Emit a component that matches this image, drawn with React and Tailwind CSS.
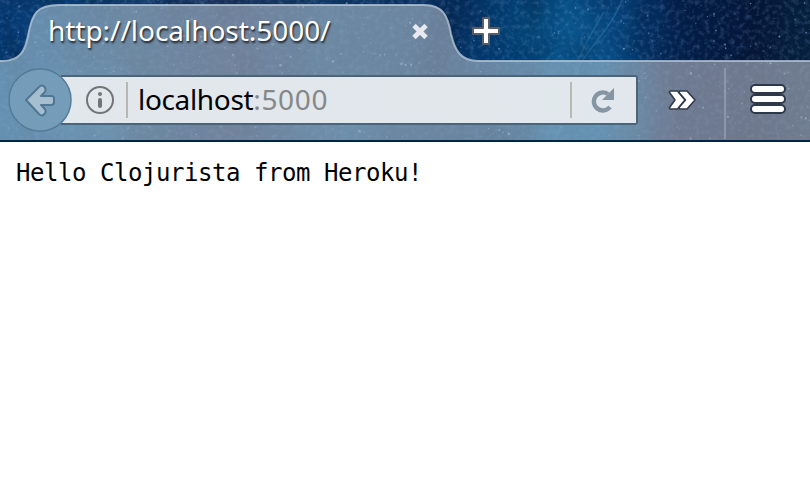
const CHROME_SHAPE =
  'M0 61 H2 C20 61 25 51 28 36 C32 13 37 5 59 5 H424 C443 5 448 16 451 34 C455 52 462 61 478 61 H810';

// Deterministic scatter of stars over the window theme
function makeStars(count, firstSeed) {
  let seed = firstSeed;
  const next = () => {
    seed = (seed * 16807) % 2147483647;
    return seed / 2147483647;
  };
  return Array.from({ length: count }, () => ({
    x: next() * 810,
    y: next() * 142,
    r: 0.4 + next() * next() * 1.1,
    o: 0.15 + next() * 0.45,
  }));
}
const STARS = makeStars(480, 4177);
const PANEL_STARS = makeStars(420, 90211);

function ThemeBackdrop() {
  return (
    <svg className="absolute inset-0" width="810" height="142" viewBox="0 0 810 142" aria-hidden="true">
      <defs>
        <linearGradient id="sky" x1="0" x2="1" y1="0" y2="0">
          <stop offset="0" stopColor="#053a74" />
          <stop offset="0.1" stopColor="#0a3f72" />
          <stop offset="0.28" stopColor="#1c345c" />
          <stop offset="0.4" stopColor="#123d6b" />
          <stop offset="0.54" stopColor="#083060" />
          <stop offset="0.62" stopColor="#023b6e" />
          <stop offset="0.68" stopColor="#064f86" />
          <stop offset="0.76" stopColor="#053f76" />
          <stop offset="0.84" stopColor="#04204c" />
          <stop offset="0.93" stopColor="#051638" />
          <stop offset="1" stopColor="#07213f" />
        </linearGradient>
        <linearGradient id="panel" x1="0" x2="1" y1="0" y2="0">
          <stop offset="0" stopColor="#88adc6" />
          <stop offset="0.16" stopColor="#90a6b9" />
          <stop offset="0.3" stopColor="#909fb3" />
          <stop offset="0.43" stopColor="#8fa8bc" />
          <stop offset="0.55" stopColor="#8fa0b3" />
          <stop offset="0.73" stopColor="#86aac2" />
          <stop offset="0.82" stopColor="#959cac" />
          <stop offset="1" stopColor="#959eae" />
        </linearGradient>
        <radialGradient id="glow">
          <stop offset="0" stopColor="#1686bd" stopOpacity="0.65" />
          <stop offset="1" stopColor="#1686bd" stopOpacity="0" />
        </radialGradient>
        <filter id="grain" x="0" y="0" width="100%" height="100%" colorInterpolationFilters="sRGB">
          <feTurbulence type="fractalNoise" baseFrequency="0.2" numOctaves="3" seed="8" />
          <feColorMatrix values="0 0 0 0 0.5  0 0 0 0 0.65  0 0 0 0 0.85  1.5 0 0 0 -0.68" />
        </filter>
        <filter id="clouds" x="0" y="0" width="100%" height="100%" colorInterpolationFilters="sRGB">
          <feTurbulence type="fractalNoise" baseFrequency="0.025 0.012" numOctaves="3" seed="3" />
          <feColorMatrix values="0 0 0 0 0  0 0 0 0 0.08  0 0 0 0 0.2  2 0 0 0 -0.75" />
        </filter>
        <clipPath id="panelArea">
          <path d={`${CHROME_SHAPE} V140 H0 Z`} />
        </clipPath>
      </defs>
      <rect width="810" height="142" fill="url(#sky)" />
      <ellipse cx="70" cy="112" rx="125" ry="55" fill="url(#glow)" />
      <ellipse cx="375" cy="118" rx="150" ry="50" fill="url(#glow)" opacity="0.5" />
      <ellipse cx="590" cy="115" rx="90" ry="80" fill="url(#glow)" opacity="0.8" />
      <ellipse cx="570" cy="28" rx="75" ry="40" fill="url(#glow)" opacity="0.25" />
      <g fill="none" stroke="#3489b9" strokeWidth="1.6" opacity="0.4">
        <path d="M622 0 C613 25 594 42 582 61 C574 74 570 105 554 142" />
        <path d="M604 12 C590 36 581 48 574 76" />
      </g>
      <rect width="810" height="142" filter="url(#clouds)" opacity="0.4" />
      <rect width="810" height="142" filter="url(#grain)" opacity="0.4" />
      <g fill="#a9cdf2">
        {STARS.map((s, i) => (
          <circle key={i} cx={s.x} cy={s.y} r={s.r} opacity={s.o} />
        ))}
      </g>
      <path d={`${CHROME_SHAPE} V140 H0 Z`} fill="url(#panel)" fillOpacity="0.73" />
      <g clipPath="url(#panelArea)" fill="#d3e2ef">
        {PANEL_STARS.map((s, i) => (
          <circle key={i} cx={s.x} cy={s.y} r={s.r} opacity={s.o * 0.7} />
        ))}
      </g>
      <path d={CHROME_SHAPE} fill="none" stroke="#b6c5d5" strokeOpacity="0.8" strokeWidth="2" />
      <rect y="140" width="810" height="2" fill="#032443" />
    </svg>
  );
}

function TabStrip() {
  return (
    <div className="relative flex h-[62px] items-center">
      <div className="ml-12 flex w-[381px] items-center justify-between">
        <span className="-mt-0.5 whitespace-nowrap text-[28px] leading-[36px] tracking-[-0.04px] text-white [text-shadow:1px_2px_2px_rgba(0,0,0,0.75)]">
          http://localhost:5000/
        </span>
        <svg width="18" height="18" viewBox="0 0 18 18" aria-label="Close tab">
          <path d="M3 3.5 L15 15.5 M15 3.5 L3 15.5" stroke="#e7e9ef" strokeWidth="4.8" />
        </svg>
      </div>
      <svg className="ml-[42px]" width="30" height="30" viewBox="0 0 30 30" aria-label="New tab">
        <path d="M12 2 H18 V12 H28 V18 H18 V28 H12 V18 H2 V12 H12 Z" fill="#fff" stroke="#5b5d65" strokeWidth="2" strokeLinejoin="round" />
      </svg>
    </div>
  );
}

function NavBar() {
  return (
    <div className="relative flex h-20 items-start">
      <svg className="relative z-10 ml-2 mt-[5px] shrink-0" width="65" height="66" viewBox="0 0 65 66" aria-label="Back">
        <circle cx="32" cy="33" r="31" fill="#759cb8" stroke="#557b98" strokeWidth="1.5" />
        <path d="M18 33 L31 20 Q34 17 36.5 20 Q39 23 36 26 L33 29 H43 Q46 29 46 31 V35 Q46 38 43 38 H33 L36 41 Q39 44 36.5 47 Q34 50 31 47 Z" fill="#a5bfd1" stroke="#4f7693" strokeWidth="2" strokeLinejoin="round" />
      </svg>
      <div className="-ml-3 mt-[13px] flex h-[50px] w-[577px] items-center rounded-r-[3px] border-y-2 border-r-2 border-[#4b6478] bg-[#e8ecef]/95">
        <svg className="ml-6 shrink-0" width="30" height="30" viewBox="0 0 30 30" fill="none" aria-label="Site information">
          <circle cx="15" cy="15" r="13" stroke="#727578" strokeWidth="2" />
          <circle cx="15" cy="9" r="2" fill="#727578" />
          <path d="M15 15 V21" stroke="#727578" strokeWidth="4" strokeLinecap="round" />
        </svg>
        <div className="ml-[11px] h-9 w-0.5 shrink-0 bg-[#b8b6b1]" />
        <div className="-mt-0.5 ml-[10px] w-[432px] whitespace-nowrap text-[28px] leading-[40px] tracking-[-0.34px] text-black">
          localhost<span className="tracking-[0.65px] text-[#85878a]">:5000</span>
        </div>
        <div className="h-9 w-0.5 shrink-0 bg-[#b9b8b3]" />
        <svg className="ml-[19px] shrink-0" width="24" height="26" viewBox="0 0 24 26" aria-label="Reload">
          <path d="M19 20 A9 9 0 1 1 17 7" fill="none" stroke="#8695a4" strokeWidth="4.4" />
          <path d="M23 1 V13 H11 Z" fill="#8695a4" />
        </svg>
      </div>
      <svg className="ml-[30px] mt-[26px] shrink-0" width="30" height="24" viewBox="0 0 30 24" aria-label="More tools">
        <g fill="#fff" stroke="#2f3b4a" strokeWidth="1.6" strokeLinejoin="round">
          <path d="M2 3 H9.5 L17 12 L9.5 21 H2 L1.5 19.5 L7 12 L1.5 4.5 Z" />
          <path d="M11.5 3 H19 L27 12 L19 21 H11.5 L11 19.5 L17.5 12 L11 4.5 Z" />
        </g>
      </svg>
      <div className="ml-[26px] mt-[6px] h-[71px] w-0.5 shrink-0 bg-[#b9c0cc]/40" />
      <svg className="ml-6 mt-[21px] shrink-0" width="36" height="32" viewBox="0 0 36 32" aria-label="Menu">
        <g fill="#fff" stroke="#2d3949" strokeWidth="2">
          <rect x="1" y="2" width="34" height="8" rx="4" />
          <rect x="1" y="12" width="34" height="8" rx="4" />
          <rect x="1" y="22" width="34" height="8" rx="4" />
        </g>
      </svg>
    </div>
  );
}

export default function App() {
  return (
    <div className="h-[504px] w-[810px] overflow-hidden bg-white font-['Noto_Sans','Open_Sans',sans-serif]">
      <header className="relative h-[142px] overflow-hidden">
        <ThemeBackdrop />
        <TabStrip />
        <NavBar />
      </header>
      <main className="px-4 pt-[17px]">
        <pre className="font-['DejaVu_Sans_Mono',monospace] text-[24px] leading-[28px] tracking-[-0.45px] text-black">
          Hello Clojurista from Heroku!
        </pre>
      </main>
    </div>
  );
}
